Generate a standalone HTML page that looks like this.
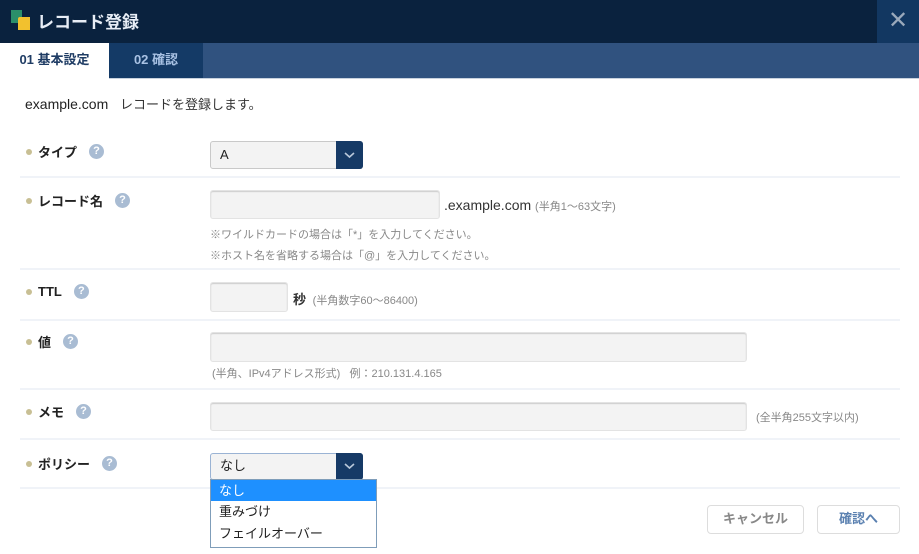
<!DOCTYPE html>
<html><head><meta charset="utf-8"><style>
*{box-sizing:border-box;margin:0;padding:0}
body{width:919px;height:554px;background:#fff;position:relative;overflow:hidden;font-family:"Liberation Sans","Noto Sans CJK JP",sans-serif;font-size:13px;color:#333}
.a{position:absolute}
.sep{position:absolute;left:20px;width:880px;height:2px;background:#f0f3f8}
.lbl{position:absolute;left:26px;font-weight:bold;font-size:13px;color:#222;display:flex;align-items:center}
.lbl:before{content:"";width:6px;height:6px;border-radius:50%;background:#c8bf94;margin-right:6px}
.q{display:inline-block;width:15px;height:15px;border-radius:50%;background:#a9bcd3;color:#fff;font-size:11px;text-align:center;line-height:15px;margin-left:12px;font-weight:bold}
.in{position:absolute;background:#f3f3f3;border:1px solid #e3e3e3;border-radius:3px;box-shadow:inset 0 1px 1px #ccc}
.sel{position:absolute;background:#f3f3f3;border:1px solid #c9c9c9;border-radius:3px;font-size:13px;padding-left:9px;color:#222}
.sel .ar{position:absolute;right:-1px;top:-1px;bottom:-1px;width:27px;background:#163a66;border-radius:0 3px 3px 0}
.note{position:absolute;font-size:11px;color:#888}
.btn{position:absolute;border:1px solid #ddd;border-radius:4px;background:#fff;text-align:center;line-height:26px;font-size:13px;font-weight:bold}
</style></head><body>
<div class="a" style="left:0;top:0;width:919px;height:43px;background:#0a223e"></div>
<div class="a" style="left:877px;top:0;width:42px;height:43px;background:#123761;color:#9aa9bb;font-size:24px;text-align:center;line-height:42px">✕</div>
<div class="a" style="left:11px;top:10px;width:11px;height:13px;background:#2b8f6a"></div>
<div class="a" style="left:18px;top:17px;width:12px;height:13px;background:#f2c12e;border-radius:2px 0 0 0"></div>
<div class="a" style="left:37px;top:8px;color:#e8eef6;font-size:17px;font-weight:bold">レコード登録</div>
<div class="a" style="left:0;top:43px;width:919px;height:35px;background:#30527f"></div>
<div class="a" style="left:0;top:78px;width:919px;height:1px;background:#c8d2de"></div>
<div class="a" style="left:0;top:43px;width:109px;height:36px;background:#fff;color:#1f3c64;font-weight:bold;font-size:13px;text-align:center;line-height:34px">01 基本設定</div>
<div class="a" style="left:109px;top:43px;width:94px;height:35px;background:#143a66;color:#a9c2e4;font-weight:bold;font-size:13px;text-align:center;line-height:34px">02 確認</div>
<div class="a" style="left:25px;top:94px;font-size:14px;color:#222">example.com&nbsp;&nbsp;&nbsp;<span style="font-size:13px;color:#333">レコードを登録します。</span></div>

<div class="lbl" style="top:142px">タイプ<span class="q">?</span></div>
<div class="sel" style="left:210px;top:141px;width:153px;height:28px;line-height:26px">A<div class="ar"><svg width="27" height="28" viewBox="0 0 27 28"><path d="M9 12l4.5 4 4.5-4" stroke="#b9c8da" stroke-width="1.6" fill="none"/></svg></div></div>
<div class="sep" style="top:176px"></div>

<div class="lbl" style="top:191px">レコード名<span class="q">?</span></div>
<div class="in" style="left:210px;top:190px;width:230px;height:29px"></div>
<div class="a" style="left:444px;top:197px;font-size:14px;color:#333">.example.com <span style="font-size:11px;color:#888">(半角1〜63文字)</span></div>
<div class="note" style="left:210px;top:226px">※ワイルドカードの場合は「*」を入力してください。</div>
<div class="note" style="left:210px;top:247px">※ホスト名を省略する場合は「@」を入力してください。</div>
<div class="sep" style="top:268px"></div>

<div class="lbl" style="top:284px">TTL<span class="q">?</span></div>
<div class="in" style="left:210px;top:282px;width:78px;height:30px"></div>
<div class="a" style="left:293px;top:289px;font-size:13px;font-weight:bold;color:#333">秒 <span style="font-weight:normal;font-size:11px;color:#888">&nbsp;(半角数字60〜86400)</span></div>
<div class="sep" style="top:319px"></div>

<div class="lbl" style="top:332px">値<span class="q">?</span></div>
<div class="in" style="left:210px;top:332px;width:537px;height:30px"></div>
<div class="note" style="left:212px;top:365px">(半角、IPv4アドレス形式)&nbsp;&nbsp;&nbsp;例：210.131.4.165</div>
<div class="sep" style="top:388px"></div>

<div class="lbl" style="top:402px">メモ<span class="q">?</span></div>
<div class="in" style="left:210px;top:402px;width:537px;height:29px"></div>
<div class="note" style="left:756px;top:409px">(全半角255文字以内)</div>
<div class="sep" style="top:438px"></div>

<div class="lbl" style="top:454px">ポリシー<span class="q">?</span></div>
<div class="sep" style="top:487px"></div>
<div class="sel" style="left:210px;top:453px;width:153px;height:27px;line-height:24px;border-color:#9ab3d4">なし<div class="ar"><svg width="27" height="27" viewBox="0 0 27 27"><path d="M9 11l4.5 4 4.5-4" stroke="#b9c8da" stroke-width="1.6" fill="none"/></svg></div></div>
<div class="a" style="left:210px;top:479px;width:167px;height:69px;border:1px solid #7f9db9;background:#fff;font-size:13px;color:#222">
<div style="height:21px;background:#1e90ff;color:#fff;padding-left:8px;line-height:21px">なし</div>
<div style="height:22px;padding-left:8px;line-height:22px">重みづけ</div>
<div style="height:22px;padding-left:8px;line-height:22px">フェイルオーバー</div>
</div>

<div class="btn" style="left:707px;top:505px;width:97px;height:29px;color:#888">キャンセル</div>
<div class="btn" style="left:817px;top:505px;width:83px;height:29px;color:#5a80b0">確認へ</div>
</body></html>
